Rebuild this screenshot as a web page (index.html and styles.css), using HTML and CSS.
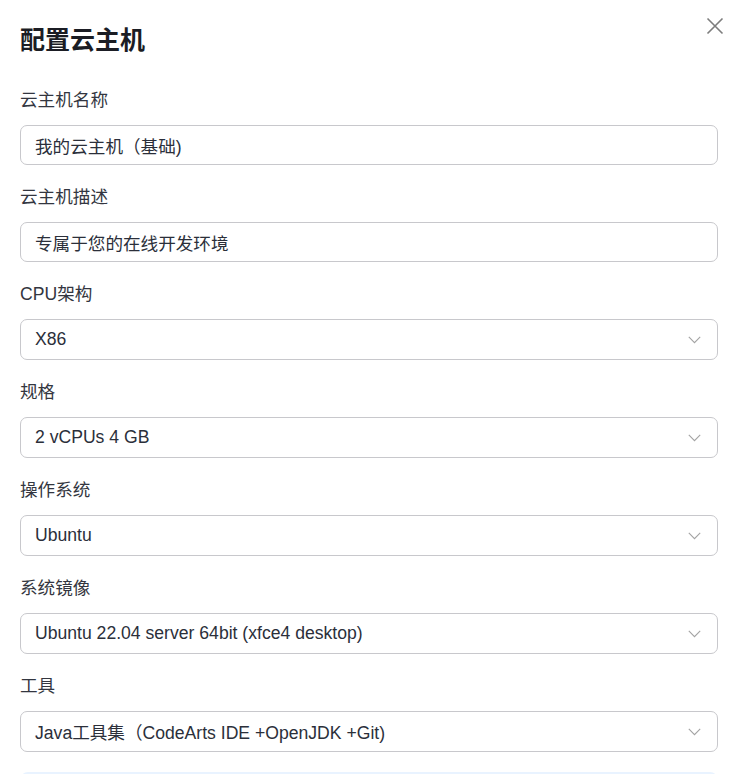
FILE: index.html
```html
<!DOCTYPE html>
<html lang="zh-CN">
<head>
<meta charset="utf-8">
<title>配置云主机</title>
<link rel="stylesheet" href="styles.css">
</head>
<body>
<div class="dialog">
  <h2 class="title">配置云主机</h2>
  <button class="close" aria-label="关闭">
    <svg width="18" height="18" viewBox="0 0 18 18"><path d="M1.5 1.5 L16.5 16.5 M16.5 1.5 L1.5 16.5" stroke="#7d7d7d" stroke-width="1.6" fill="none"/></svg>
  </button>
  <div class="form">
    <div class="item">
      <div class="label">云主机名称</div>
      <div class="control input">我的云主机（基础)</div>
    </div>
    <div class="item">
      <div class="label">云主机描述</div>
      <div class="control input">专属于您的在线开发环境</div>
    </div>
    <div class="item">
      <div class="label">CPU架构</div>
      <div class="control select"><span>X86</span><svg class="chev" width="13" height="8" viewBox="0 0 13 8"><path d="M0.8 0.8 L6.5 6.6 L12.2 0.8" stroke="#a3a3a3" stroke-width="1.1" fill="none"/></svg></div>
    </div>
    <div class="item">
      <div class="label">规格</div>
      <div class="control select"><span>2 vCPUs 4 GB</span><svg class="chev" width="13" height="8" viewBox="0 0 13 8"><path d="M0.8 0.8 L6.5 6.6 L12.2 0.8" stroke="#a3a3a3" stroke-width="1.1" fill="none"/></svg></div>
    </div>
    <div class="item">
      <div class="label">操作系统</div>
      <div class="control select"><span>Ubuntu</span><svg class="chev" width="13" height="8" viewBox="0 0 13 8"><path d="M0.8 0.8 L6.5 6.6 L12.2 0.8" stroke="#a3a3a3" stroke-width="1.1" fill="none"/></svg></div>
    </div>
    <div class="item">
      <div class="label">系统镜像</div>
      <div class="control select"><span>Ubuntu 22.04 server 64bit (xfce4 desktop)</span><svg class="chev" width="13" height="8" viewBox="0 0 13 8"><path d="M0.8 0.8 L6.5 6.6 L12.2 0.8" stroke="#a3a3a3" stroke-width="1.1" fill="none"/></svg></div>
    </div>
    <div class="item">
      <div class="label">工具</div>
      <div class="control select"><span>Java工具集（CodeArts IDE +OpenJDK +Git)</span><svg class="chev" width="13" height="8" viewBox="0 0 13 8"><path d="M0.8 0.8 L6.5 6.6 L12.2 0.8" stroke="#a3a3a3" stroke-width="1.1" fill="none"/></svg></div>
    </div>
  </div>
  <div class="notice"></div>
</div>
</body>
</html>
```
FILE: styles.css
```css
html, body {
  margin: 0;
  padding: 0;
  background: #ffffff;
}
body {
  font-family: "Liberation Sans", "Noto Sans CJK SC", sans-serif;
  color: #2b2f3a;
}
.dialog {
  position: relative;
  width: 698px;
  padding: 22px 11px 0 20px;
  height: 752px;
  overflow: hidden;
}
.title {
  margin: 0 0 30px 0;
  font-size: 25px;
  line-height: 36px;
  font-weight: 700;
  color: #1b1d24;
}
.close {
  position: absolute;
  top: 17px;
  right: 5px;
  width: 18px;
  height: 18px;
  padding: 0;
  border: 0;
  background: none;
  display: block;
}
.close svg { display: block; }
.form {
  display: flex;
  flex-direction: column;
}
.item {
  display: flex;
  flex-direction: column;
  margin-bottom: 20px;
}
.label {
  font-size: 17.6px;
  line-height: 24px;
  margin-bottom: 13px;
  color: #333640;
}
.control {
  box-sizing: border-box;
  border: 1px solid #c8c8cc;
  border-radius: 7px;
  font-size: 17.6px;
  color: #2b2f3a;
  display: flex;
  align-items: center;
  padding: 0 14px;
}
.input {
  height: 40px;
}
.select {
  height: 41px;
  justify-content: space-between;
  padding-right: 16px;
}
.chev { display: block; }
.notice {
  height: 40px;
  background: #e9f3ff;
  border-radius: 8px;
}
```
